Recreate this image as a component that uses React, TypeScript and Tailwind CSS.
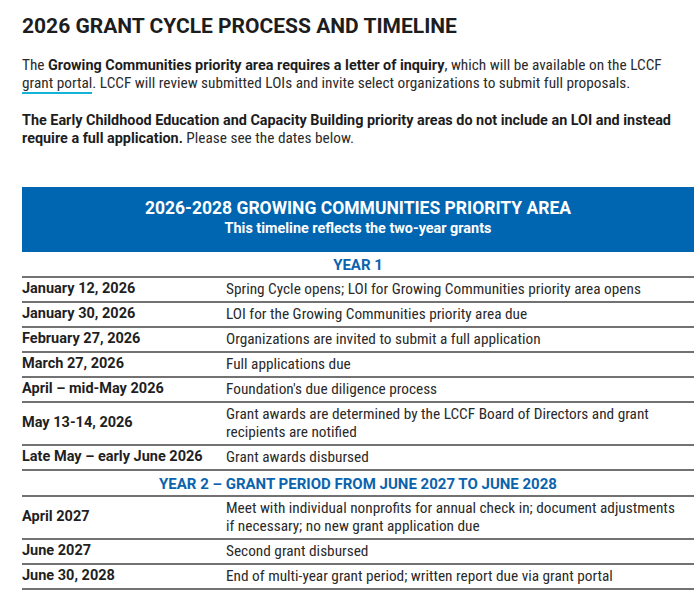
const year1 = [
  { date: "January 12, 2026", text: "Spring Cycle opens; LOI for Growing Communities priority area opens" },
  { date: "January 30, 2026", text: "LOI for the Growing Communities priority area due" },
  { date: "February 27, 2026", text: "Organizations are invited to submit a full application" },
  { date: "March 27, 2026", text: "Full applications due" },
  { date: "April – mid-May 2026", text: "Foundation's due diligence process" },
  {
    date: "May 13-14, 2026",
    text: "Grant awards are determined by the LCCF Board of Directors and grant recipients are notified",
  },
  { date: "Late May – early June 2026", text: "Grant awards disbursed" },
];

const year2 = [
  {
    date: "April 2027",
    text: "Meet with individual nonprofits for annual check in; document adjustments if necessary; no new grant application due",
  },
  { date: "June 2027", text: "Second grant disbursed" },
  { date: "June 30, 2028", text: "End of multi-year grant period; written report due via grant portal" },
];

const bold = "font-['Roboto',sans-serif] font-bold";

function Row({ date, text }: { date: string; text: string }) {
  return (
    <div className="grid grid-cols-[204px_1fr] items-center border-b-2 border-[#727272] pt-[2px] pb-[3px]">
      <div className={`${bold} text-[14.5px] leading-[18px] text-[#1f1f1f]`}>{date}</div>
      <div className="pr-[12px] text-[15.3px] leading-[18px] text-[#2a2a2a]">{text}</div>
    </div>
  );
}

function YearHeading({ children }: { children: string }) {
  return (
    <div
      className={`${bold} border-b-2 border-[#727272] pt-[4px] pb-[2px] text-center text-[15px] leading-[18px] text-[#0b63ae]`}
    >
      {children}
    </div>
  );
}

export default function App() {
  return (
    <div className="min-h-screen bg-white pl-[22px] pr-[5px] pt-[12px] font-['Roboto_Condensed',Roboto,sans-serif] text-[#222]">
      <h1 className={`${bold} text-[21px] leading-[28px] text-[#1d1d1d]`}>
        2026 GRANT CYCLE PROCESS AND TIMELINE
      </h1>

      <p className="mt-[16px] text-[15.3px] leading-[18px] text-[#2b2b2b]">
        The{" "}
        <strong className={`${bold} text-[14.4px] leading-none text-[#1d1d1d]`}>
          Growing Communities priority area requires a letter of inquiry
        </strong>
        , which will be available on the LCCF{" "}
        <a href="#" className="border-b-2 border-[#14b4d8]">
          grant portal
        </a>
        . LCCF will review submitted LOIs and invite select organizations to submit full proposals.
      </p>

      <p className="mt-[19px] text-[15.3px] leading-[18px] text-[#2b2b2b]">
        <strong className={`${bold} text-[14.4px] leading-none text-[#1d1d1d]`}>
          The Early Childhood Education and Capacity Building priority areas do not include an LOI and instead
          require a full application.
        </strong>{" "}
        Please see the dates below.
      </p>

      <div className="mt-[40px] w-[672px]">
        <div className={`${bold} bg-[#0066b1] pt-[11px] pb-[14px] text-center text-white`}>
          <div className="text-[17.5px] leading-[20px]">2026-2028 GROWING COMMUNITIES PRIORITY AREA</div>
          <div className="mt-[2px] text-[14.4px] leading-[18px]">This timeline reflects the two-year grants</div>
        </div>

        <YearHeading>YEAR 1</YearHeading>
        {year1.map((r) => (
          <Row key={r.date} {...r} />
        ))}
        <YearHeading>YEAR 2 – GRANT PERIOD FROM JUNE 2027 TO JUNE 2028</YearHeading>
        {year2.map((r) => (
          <Row key={r.date} {...r} />
        ))}
      </div>
    </div>
  );
}
